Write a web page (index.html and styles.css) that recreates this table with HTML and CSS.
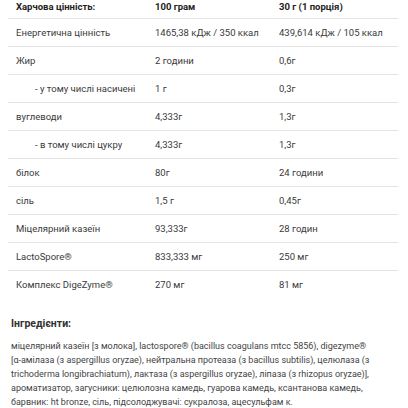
FILE: index.html
```html
<!DOCTYPE html>
<html lang="uk">
<head>
<meta charset="utf-8">
<link rel="stylesheet" href="styles.css">
</head>
<body>
<div class="page">
  <table class="facts">
    <colgroup><col class="c1"><col class="c2"><col class="c3"></colgroup>
    <thead>
      <tr><th>Харчова цінність:</th><th>100 грам</th><th>30 г (1 порція)</th></tr>
    </thead>
    <tbody>
      <tr><td>Енергетична цінність</td><td>1465,38 кДж / 350 ккал</td><td>439,614 кДж / 105 ккал</td></tr>
      <tr><td>Жир</td><td>2 години</td><td>0,6г</td></tr>
      <tr><td class="sub">- у тому числі насичені</td><td>1 г</td><td>0,3г</td></tr>
      <tr><td>вуглеводи</td><td>4,333г</td><td>1,3г</td></tr>
      <tr><td class="sub">- в тому числі цукру</td><td>4,333г</td><td>1,3г</td></tr>
      <tr><td>білок</td><td>80г</td><td>24 години</td></tr>
      <tr><td>сіль</td><td>1,5 г</td><td>0,45г</td></tr>
      <tr><td>Міцелярний казеїн</td><td>93,333г</td><td>28 годин</td></tr>
      <tr><td>LactoSpore®</td><td>833,333 мг</td><td>250 мг</td></tr>
      <tr><td>Комплекс DigeZyme®</td><td>270 мг</td><td>81 мг</td></tr>
    </tbody>
  </table>
  <section class="ingredients">
    <h3>Інгредієнти:</h3>
    <p>міцелярний казеїн [з молока], lactospore® (bacillus coagulans mtcc 5856), digezyme® <span class="nb">[α-амілаза</span> (з aspergillus oryzae), нейтральна протеаза (з bacillus subtilis), целюлаза (з trichoderma longibrachiatum), лактаза (з aspergillus oryzae), ліпаза (з rhizopus oryzae)], ароматизатор, загусники: целюлозна камедь, гуарова камедь, ксантанова камедь, барвник: ht bronze, сіль, підсолоджувачі: сукралоза, ацесульфам к.</p>
  </section>
</div>
</body>
</html>
```
FILE: styles.css
```css
html, body {
  margin: 0;
  padding: 0;
  background: #ffffff;
}
body {
  font-family: Roboto, "Noto Sans", sans-serif;
  color: #333333;
  overflow: hidden;
}
.page {
  padding: 0 10px 0 8px;
}
.facts {
  width: 390px;
  border-collapse: collapse;
  table-layout: fixed;
  font-size: 9.5px;
}
.c1 { width: 139px; }
.c2 { width: 124px; }
.c3 { width: 127px; }
.facts th,
.facts td {
  height: 27px;
  padding: 0 8px;
  text-align: left;
  vertical-align: middle;
  border-bottom: 1px solid #e4e4e4;
  white-space: nowrap;
}
.facts th {
  height: 17px;
  padding-top: 1px;
  vertical-align: top;
  line-height: 11px;
  font-weight: 700;
  color: #222222;
}
.facts td {
  font-weight: 400;
  color: #3a3a3a;
}
.facts tbody tr:last-child td {
  border-bottom: none;
}
.facts td.sub {
  padding-left: 27px;
}
.ingredients {
  padding: 0 0 0 3px;
}
.ingredients h3 {
  margin: 19px 0 8px;
  font-size: 10.5px;
  font-weight: 700;
  color: #333333;
  line-height: 14px;
}
.ingredients p {
  margin: 0;
  font-size: 9px;
  line-height: 14px;
  color: #444444;
  width: 384px;
}
.nb {
  white-space: nowrap;
}
```
